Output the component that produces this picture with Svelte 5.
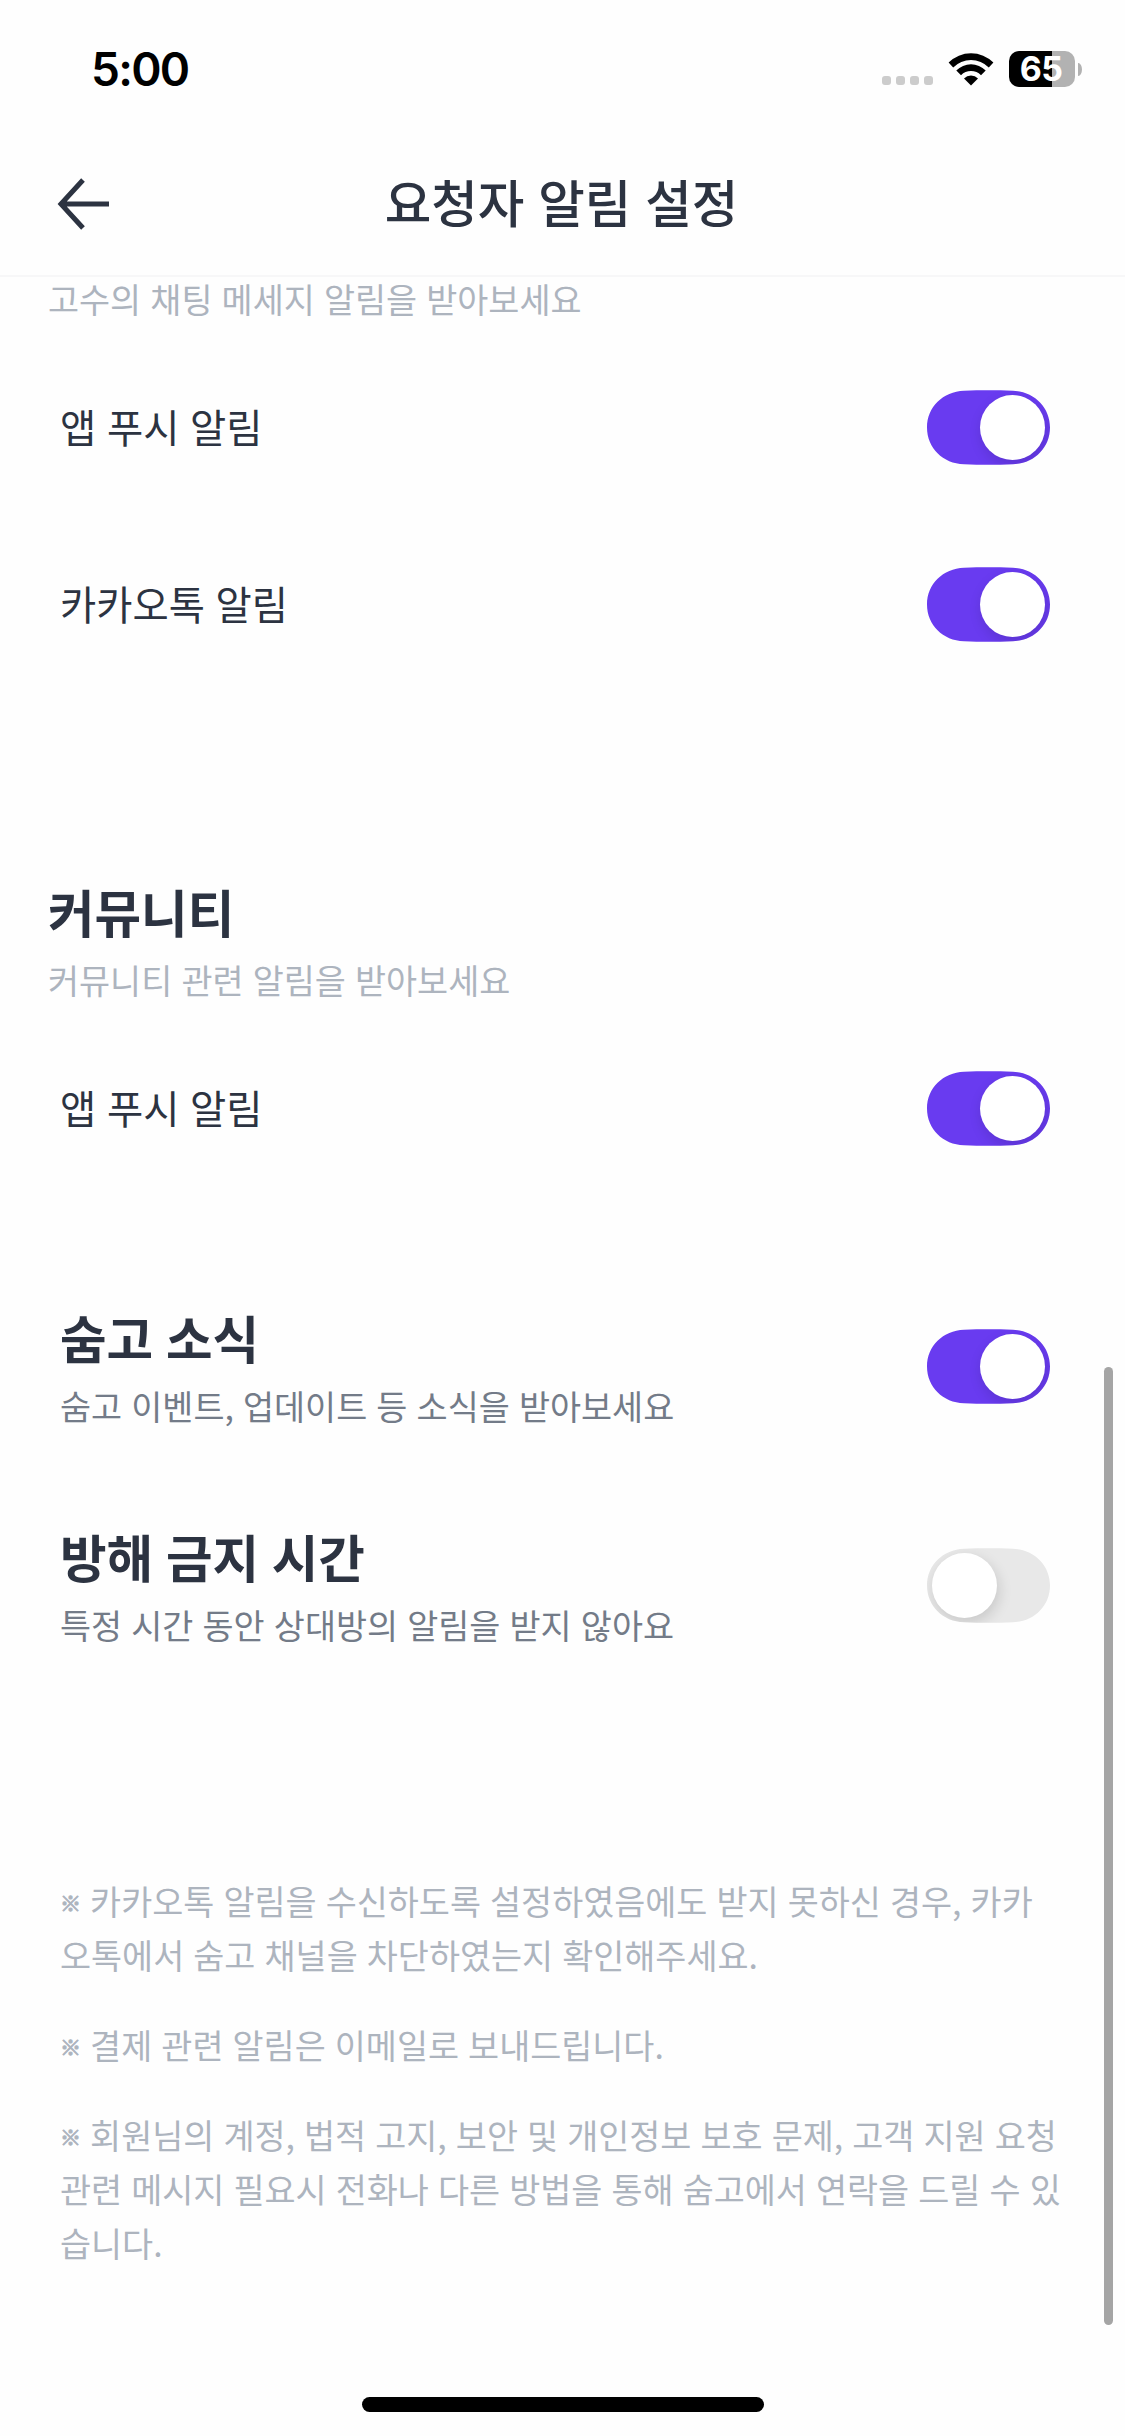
<script>
    let push_settings = [
        { id: 'chat_push', label: '앱 푸시 알림', checked: true },
        { id: 'chat_kakao', label: '카카오톡 알림', checked: true }
    ];

    let community_settings = [
        { id: 'community_push', label: '앱 푸시 알림', checked: true }
    ];

    let general_settings = [
        {
            id: 'news',
            label: '숨고 소식',
            description: '숨고 이벤트, 업데이트 등 소식을 받아보세요',
            checked: true
        },
        {
            id: 'do_not_disturb',
            label: '방해 금지 시간',
            description: '특정 시간 동안 상대방의 알림을 받지 않아요',
            checked: false
        }
    ];

    const notices = [
        '카카오톡 알림을 수신하도록 설정하였음에도 받지 못하신 경우, 카카오톡에서 숨고 채널을 차단하였는지 확인해주세요.',
        '결제 관련 알림은 이메일로 보내드립니다.',
        '회원님의 계정, 법적 고지, 보안 및 개인정보 보호 문제, 고객 지원 요청 관련 메시지 필요시 전화나 다른 방법을 통해 숨고에서 연락을 드릴 수 있습니다.'
    ];
</script>

<div class="screen">
    <div class="status-bar">
        <span class="time">5:00</span>
        <div class="status-icons">
            <div class="signal">
                {#each [1, 2, 3, 4] as dot (dot)}
                    <i></i>
                {/each}
            </div>
            <svg class="wifi" viewBox="0 0 46 34" width="46" height="34">
                <path d="M0.6 10.6a31.6 31.6 0 0 1 44.8 0l-4.6 4.8a25.2 25.2 0 0 0-35.6 0z" />
                <path d="M8.3 18.4a20.8 20.8 0 0 1 29.4 0l-4.7 4.8a14.2 14.2 0 0 0-20 0z" />
                <path d="M16 26.4a10 10 0 0 1 14 0l-7 7.2z" />
            </svg>
            <div class="battery">
                <div class="battery-body">65</div>
                <div class="battery-tip"></div>
            </div>
        </div>
    </div>

    <header class="header">
        <button class="back-btn" aria-label="뒤로">
            <svg viewBox="0 0 54 54" width="54" height="54">
                <path d="M26 3 4 27l22 24M4 27h48" />
            </svg>
        </button>
        <h1>요청자 알림 설정</h1>
    </header>

    <main class="content">
        <section class="group chat">
            <p class="group-desc">고수의 채팅 메세지 알림을 받아보세요</p>
            {#each push_settings as item (item.id)}
                <div class="row">
                    <span class="row-label">{item.label}</span>
                    <button
                        class="toggle"
                        class:on={item.checked}
                        aria-label={item.label}
                        on:click={() => (item.checked = !item.checked)}
                    >
                        <span class="knob"></span>
                    </button>
                </div>
            {/each}
        </section>

        <section class="group community">
            <h2>커뮤니티</h2>
            <p class="group-desc">커뮤니티 관련 알림을 받아보세요</p>
            {#each community_settings as item (item.id)}
                <div class="row">
                    <span class="row-label">{item.label}</span>
                    <button
                        class="toggle"
                        class:on={item.checked}
                        aria-label={item.label}
                        on:click={() => (item.checked = !item.checked)}
                    >
                        <span class="knob"></span>
                    </button>
                </div>
            {/each}
        </section>

        <section class="general">
            {#each general_settings as item (item.id)}
                <div class="row large">
                    <div class="row-text">
                        <h2>{item.label}</h2>
                        <p>{item.description}</p>
                    </div>
                    <button
                        class="toggle"
                        class:on={item.checked}
                        aria-label={item.label}
                        on:click={() => (item.checked = !item.checked)}
                    >
                        <span class="knob"></span>
                    </button>
                </div>
            {/each}
        </section>

        <div class="notices">
            {#each notices as notice}
                <p><span class="mark">※</span> {notice}</p>
            {/each}
        </div>
    </main>

    <div class="scrollbar"></div>
    <div class="home-indicator"></div>
</div>

<style>
    :global(body) {
        margin: 0;
        background: #fefefe;
    }

    .screen {
        position: relative;
        display: flex;
        flex-direction: column;
        width: 1125px;
        height: 2436px;
        overflow: hidden;
        background: #fefefe;
        color: #2c3341;
        font-family: 'Noto Sans CJK KR', sans-serif;
    }

    h1,
    h2,
    p {
        margin: 0;
    }

    h1,
    p,
    .row-label {
        word-spacing: 0.048em;
    }

    button {
        padding: 0;
        border: none;
        background: none;
        cursor: pointer;
    }

    .status-bar {
        display: flex;
        flex: none;
        justify-content: space-between;
        height: 132px;
        padding: 0 43px 0 91px;
        box-sizing: border-box;
        color: #000;
        font-family: Inter, sans-serif;
    }

    .time {
        padding-top: 41px;
        font-size: 46px;
        font-weight: 600;
        line-height: 56px;
        letter-spacing: -1.7px;
    }

    .status-icons {
        display: flex;
        align-items: flex-start;
        padding-top: 51px;
    }

    .signal {
        display: flex;
        gap: 5px;
        padding-top: 25px;
        margin-right: 15px;
    }

    .signal i {
        width: 9px;
        height: 9px;
        border-radius: 3px;
        background: #ccc;
    }

    .wifi {
        margin: 1px 15px 0 0;
    }

    .battery {
        display: flex;
        align-items: center;
        gap: 3px;
    }

    .battery-body {
        width: 66px;
        height: 36px;
        padding-right: 2px;
        box-sizing: border-box;
        border-radius: 10px;
        background: linear-gradient(90deg, #000 43px, #b2b2b2 43px);
        color: #fff;
        font-size: 34px;
        font-weight: 700;
        line-height: 36px;
        letter-spacing: -0.6px;
        text-align: center;
    }

    .battery-tip {
        width: 4px;
        height: 13px;
        border-radius: 0 4px 4px 0 / 0 7px 7px 0;
        background: #b2b2b2;
    }

    .header {
        display: grid;
        flex: none;
        grid-template-columns: 150px 1fr 152px;
        align-items: center;
        height: 145px;
        box-sizing: border-box;
        border-bottom: 2px solid #f7f7f8;
    }

    .back-btn {
        display: flex;
        padding-left: 57px;
    }

    .back-btn path {
        fill: none;
        stroke: #2c3341;
        stroke-width: 5;
    }

    h1 {
        padding-bottom: 5px;
        font-size: 50.625px;
        font-weight: 500;
        line-height: 76px;
        text-align: center;
        white-space: nowrap;
    }

    .content {
        flex: 1;
    }

    .group {
        padding: 0 48px;
    }

    .community {
        padding-top: 177px;
    }

    .general {
        padding: 60px 48px 0;
    }

    h2 {
        font-size: 50.625px;
        font-weight: 700;
        line-height: 83px;
        word-spacing: 0.025em;
    }

    .group-desc {
        margin-bottom: 13px;
        color: #adb4be;
        font-size: 33.75px;
        line-height: 54px;
    }

    .chat .group-desc {
        margin-bottom: 18px;
        line-height: 44px;
    }

    .row {
        display: flex;
        align-items: center;
        justify-content: space-between;
        height: 177px;
        padding: 0 27px 0 12px;
    }

    .row-label {
        padding-bottom: 3px;
        font-size: 39.375px;
        line-height: 60px;
    }

    .row.large {
        height: 219px;
    }

    .row-text {
        padding-bottom: 4px;
    }

    .row-text p {
        color: #737b88;
        font-size: 33.75px;
        line-height: 54px;
    }

    .toggle {
        display: flex;
        flex: none;
        align-items: center;
        width: 123px;
        height: 75px;
        padding: 0 5px;
        background: #e8e8e8;
        clip-path: path('M0 37.5C0 17 16 1.4 37 0.7C46 0.3 53 0.2 61.5 0.2S77 0.3 86 0.7C107 1.4 123 17 123 37.5S107 73.6 86 74.3C77 74.7 70 74.8 61.5 74.8S46 74.7 37 74.3C16 73.6 0 58 0 37.5Z');
    }

    .toggle.on {
        justify-content: flex-end;
        background: #693bf0;
    }

    .knob {
        width: 65px;
        height: 65px;
        border-radius: 50%;
        background: #fff;
        box-shadow: 2px 5px 14px rgba(0, 0, 0, 0.14);
    }

    .notices {
        display: flex;
        flex-direction: column;
        gap: 36px;
        padding: 179px 63px 0 60px;
        color: #adb4be;
        font-size: 33.75px;
        line-height: 54px;
        word-break: break-all;
    }

    .notices p {
        word-spacing: 0.046em;
    }

    .mark {
        display: inline-block;
        width: 21px;
        font-size: 21px;
        font-weight: 700;
        line-height: 30px;
        vertical-align: 4px;
        -webkit-text-stroke: 1px currentColor;
    }

    .scrollbar {
        position: absolute;
        top: 1367px;
        right: 12px;
        width: 9px;
        height: 958px;
        border-radius: 5px;
        background: #a5a5a5;
    }

    .home-indicator {
        position: absolute;
        bottom: 24px;
        left: 50%;
        width: 402px;
        height: 15px;
        border-radius: 8px;
        background: #000;
        transform: translateX(-50%);
    }
</style>
